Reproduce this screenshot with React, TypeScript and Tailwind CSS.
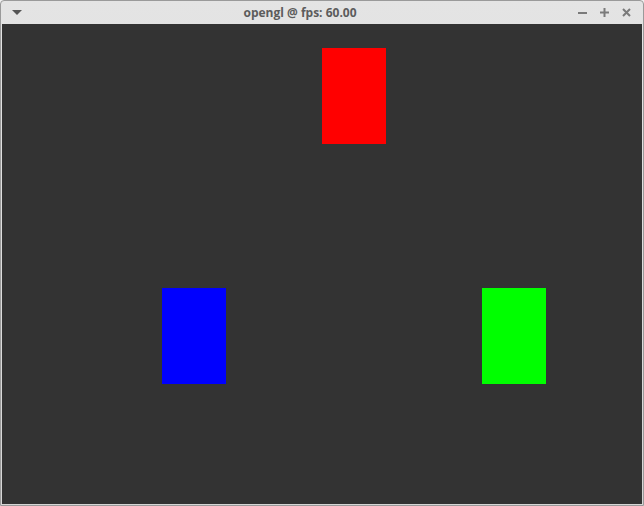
export default function App() {
  return (
    <div className="w-[644px] h-[506px] bg-[#f2f2f2] overflow-hidden">
      <div className="w-full h-full flex flex-col rounded-t-[4px] border border-[#9a9a9a] bg-gradient-to-b from-[#e4e4e4] to-[#d6d6d6]">
        {/* title bar */}
        <div className="h-[23px] flex items-center px-[9px] relative">
          <svg width="10" height="6" viewBox="0 0 10 6" className="mt-[1px] ml-[2px]">
            <polygon points="0,0 10,0 5,5" fill="#555" />
          </svg>
          <div
            className="flex-1 text-center text-[12px] font-bold text-[#5c5c5c] pt-[1px]"
            style={{ fontFamily: '"Open Sans", "Noto Sans", sans-serif' }}
          >
            opengl @ fps: 60.00
          </div>
          <div className="flex items-center gap-[13px] mr-[3px]">
            <svg width="9" height="9" viewBox="0 0 9 9">
              <rect x="0" y="4" width="9" height="2" fill="#7a7a7a" />
            </svg>
            <svg width="9" height="9" viewBox="0 0 9 9">
              <rect x="0" y="3.5" width="9" height="2" fill="#7a7a7a" />
              <rect x="3.5" y="0" width="2" height="9" fill="#7a7a7a" />
            </svg>
            <svg width="9" height="9" viewBox="0 0 9 9">
              <path d="M1 1 L8 8 M8 1 L1 8" stroke="#7a7a7a" strokeWidth="2" />
            </svg>
          </div>
        </div>
        {/* gl canvas */}
        <div className="flex-1 mx-[1px] mb-[1px] bg-[#333333] relative">
          <div className="absolute left-[320px] top-[24px] w-[64px] h-[96px] bg-[#ff0000]" />
          <div className="absolute left-[160px] top-[264px] w-[64px] h-[96px] bg-[#0000ff]" />
          <div className="absolute left-[480px] top-[264px] w-[64px] h-[96px] bg-[#00ff00]" />
        </div>
      </div>
    </div>
  );
}
